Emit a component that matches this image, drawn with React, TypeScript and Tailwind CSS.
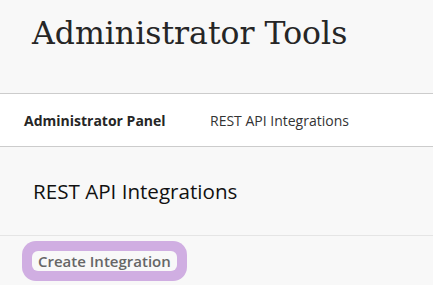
import React from 'react';

export default function App() {
  return (
    <div className="w-[433px] h-[285px] overflow-hidden bg-[#f8f8f8] font-['Open_Sans',sans-serif]">
      {/* header */}
      <header className="h-[94px] border-b border-[#cccccc] pl-[32px] pt-[12px]">
        <h1 className="font-['DejaVu_Serif',serif] text-[31.5px] leading-[42px] text-[#262626]">
          Administrator Tools
        </h1>
      </header>

      {/* nav */}
      <nav className="h-[53px] bg-white border-b border-[#cccccc] flex items-center pl-[24px] text-[14px] text-[#262626]">
        <span className="font-bold w-[186px]">Administrator Panel</span>
        <span className="text-[#333333]">REST API Integrations</span>
      </nav>

      {/* content */}
      <div className="pl-[33px] h-[89px] flex items-center border-b border-[#e5e5e5]">
        <h2 className="text-[20.6px] text-[#111111]">REST API Integrations</h2>
      </div>

      <div className="pl-[22px] pt-[5px]">
        <button className="rounded-[14px] bg-[#d0aee2] p-[10px]">
          <span className="block rounded-[6px] bg-[#f8f8f8] px-[6px] text-[15px] leading-[20px] font-semibold text-[#666666]">
            Create Integration
          </span>
        </button>
      </div>
    </div>
  );
}
